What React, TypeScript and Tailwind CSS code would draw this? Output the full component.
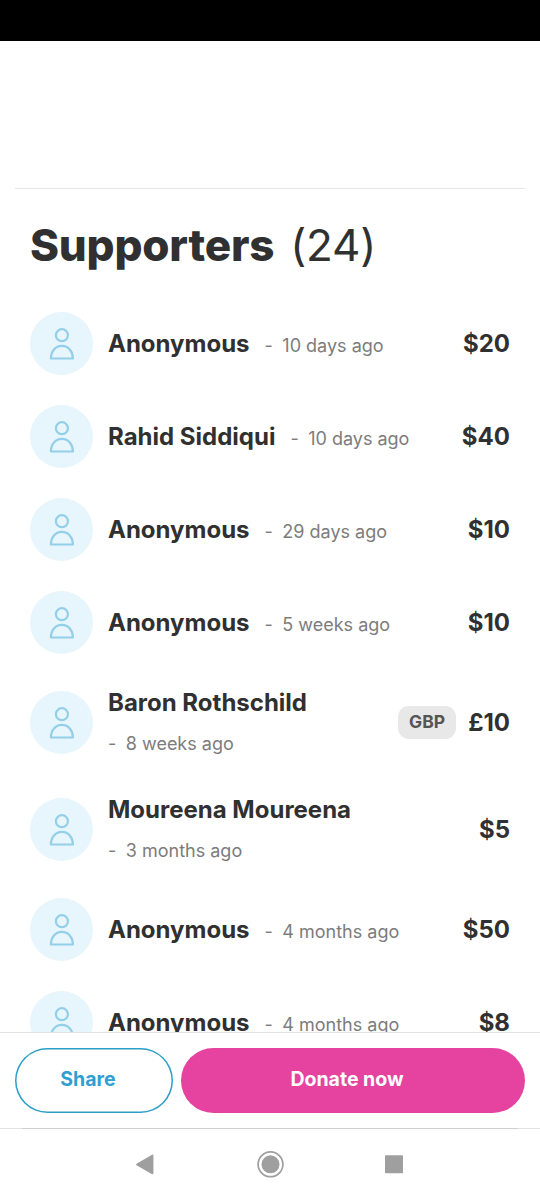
type Supporter = {
  name: string;
  time: string;
  amount: string;
  currency?: string;
  stacked?: boolean;
};

const supporters: Supporter[] = [
  { name: "Anonymous", time: "10 days ago", amount: "$20" },
  { name: "Rahid Siddiqui", time: "10 days ago", amount: "$40" },
  { name: "Anonymous", time: "29 days ago", amount: "$10" },
  { name: "Anonymous", time: "5 weeks ago", amount: "$10" },
  { name: "Baron Rothschild", time: "8 weeks ago", amount: "£10", currency: "GBP", stacked: true },
  { name: "Moureena Moureena", time: "3 months ago", amount: "$5", stacked: true },
  { name: "Anonymous", time: "4 months ago", amount: "$50" },
  { name: "Anonymous", time: "4 months ago", amount: "$8" },
];

function Avatar() {
  return (
    <div className="flex size-[63px] shrink-0 items-center justify-center rounded-full bg-[#e7f5fc]">
      <svg width="26" height="34" viewBox="0 0 26 34" fill="none" stroke="#93cfe8" strokeWidth="2.2" strokeLinejoin="round">
        <circle cx="12.9" cy="8.2" r="6" />
        <path d="M1.9 31.5C1.9 24.2 6.5 18.8 12.9 18.8S23.900 24.2 23.900 31.5Z" />
      </svg>
    </div>
  );
}

function Row({ item }: { item: Supporter }) {
  return (
    <li className={`flex shrink-0 items-center px-[30px] ${item.stacked ? "h-[107px]" : "h-[93px]"}`}>
      <Avatar />
      <div
        className={
          item.stacked
            ? "ml-[15px] flex flex-col gap-[11px] pt-px"
            : "ml-[15px] flex items-start gap-[15px] pt-[3px]"
        }
      >
        <span className="text-[24px] leading-[30px] font-bold text-[#303030]">{item.name}</span>
        <span
          className={`flex gap-[9.5px] text-[18px] leading-[30px] text-[#7c7c7c] ${item.stacked ? "" : "pt-[2px]"}`}
        >
          <span>-</span>
          <span>{item.time}</span>
        </span>
      </div>
      <div className="ml-auto flex items-center gap-3">
        {item.currency && (
          <span className="flex h-[33px] w-[58px] items-center justify-center rounded-[11px] bg-[#e8e8e8] text-[17.5px] font-bold text-[#555]">
            {item.currency}
          </span>
        )}
        <span className="text-[24px] leading-[30px] font-bold text-[#303030]">{item.amount}</span>
      </div>
    </li>
  );
}

export default function App() {
  return (
    <div className="flex h-[1200px] w-[540px] flex-col overflow-hidden bg-white font-['Inter',sans-serif]">
      <div className="h-[41px] shrink-0 bg-black" />
      <main className="flex h-[991px] shrink-0 flex-col overflow-hidden">
        <div className="mx-[15px] mt-[147px] shrink-0 border-t border-[#e6e6e6]" />
        <h1 className="mt-[26px] flex h-[60px] shrink-0 items-center gap-4 px-[30px] text-[44px] leading-[60px] tracking-[-0.2px] text-[#303030]">
          <span className="font-extrabold">Supporters</span>
          <span>(24)</span>
        </h1>
        <ul className="mt-[22px] flex shrink-0 flex-col">
          {supporters.map((item, i) => (
            <Row key={i} item={item} />
          ))}
        </ul>
      </main>
      <footer className="flex h-[96px] shrink-0 items-start gap-[8px] border-t border-[#e3e3e3] bg-white px-[15px] pt-[15px]">
        <button className="h-[65px] w-[158px] rounded-full pr-3 pb-px text-[19.5px] font-bold text-[#2f9fd2] shadow-[inset_0_0_0_1.5px_#2b9fc6]">
          Share
        </button>
        <button className="h-[65px] flex-1 rounded-full bg-[#e5439f] pr-3 pb-px text-[19.5px] font-bold text-white">
          Donate now
        </button>
      </footer>
      <nav className="flex flex-1 flex-col bg-white">
        <div className="bg-[#e3e3e3] px-[22px]">
          <div className="h-px bg-[#cfcfcf]" />
        </div>
        <svg width="540" height="71" viewBox="0 0 540 71" fill="#9f9f9f">
          <path d="M152 25.700Q153.400 25 153.400 26.500V44Q153.400 46 151.700 45L136.500 36.300Q135.500 35.500 136.500 34.800Z" />
          <circle cx="270.500" cy="35.300" r="12.400" fill="none" stroke="#9f9f9f" strokeWidth="1.700" />
          <circle cx="270.500" cy="35.300" r="9" />
          <rect x="385" y="26.300" width="18" height="18" rx="1" />
        </svg>
      </nav>
    </div>
  );
}
